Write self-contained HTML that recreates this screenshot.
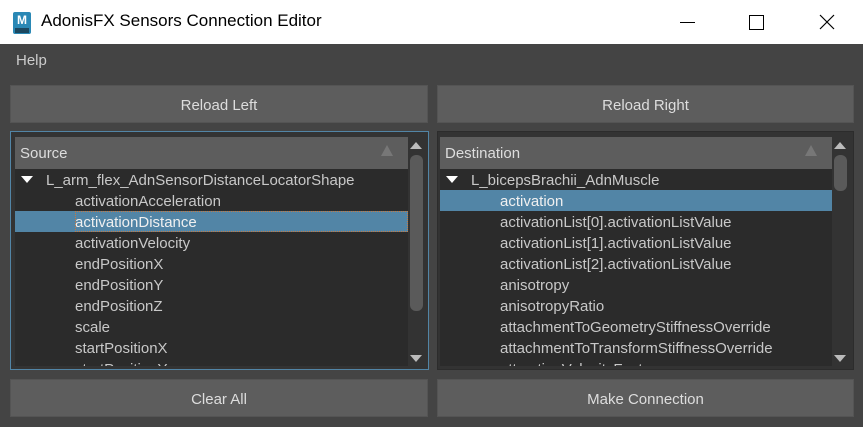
<!DOCTYPE html>
<html><head><meta charset="utf-8"><style>
*{margin:0;padding:0;box-sizing:border-box}
body{width:863px;height:427px;background:#444;font-family:"Segoe UI","Liberation Sans",sans-serif;overflow:hidden;position:relative;color:#c8c8c8}
.a{position:absolute}
.title{left:0;top:0;width:863px;height:44px;background:#fff}
.btn{background:#5d5d5d;border:1px solid #545454;color:#ddd;font-size:15px;display:flex;align-items:center;justify-content:center;height:38px;padding-top:2px}
.list{background:#2b2b2b;overflow:hidden}
.hdr{background:#5d5d5d;height:32px;font-size:15px;color:#ddd;padding:8px 0 0 5px}
.row{height:21px;font-size:15px;line-height:23px;white-space:nowrap;color:#c8c8c8}
.sel{background:#5285a6;color:#f0f0f0}
.sb{background:#333}
.thumb{position:absolute;left:2px;width:13px;background:#5a5a5a;border-radius:6px}
.tri{width:0;height:0;border-left:6px solid transparent;border-right:6px solid transparent;position:absolute;left:2px}
</style></head><body>
<div class="a title">
<div class="a" style="left:13px;top:12px;width:18px;height:22px;background:#2a88b5;border-radius:2px;color:#fff;font:bold 12px 'Liberation Sans',sans-serif;text-align:center;line-height:16px">M<div style="position:absolute;left:2px;bottom:1px;width:14px;height:5px;background:#1c4860"></div></div>
<div class="a" style="left:41px;top:11px;font-size:17px;color:#000">AdonisFX Sensors Connection Editor</div>
<div class="a" style="left:680px;top:22px;width:15px;height:1px;background:#000"></div>
<div class="a" style="left:749px;top:15px;width:15px;height:15px;border:1px solid #000"></div>
<svg class="a" style="left:819px;top:14px" width="16" height="16"><path d="M1 1L15 15M15 1L1 15" stroke="#000" stroke-width="1.2"/></svg>
</div>
<div class="a" style="left:16px;top:52px;font-size:15px;color:#ccc">Help</div>
<div class="a btn" style="left:10px;top:85px;width:418px">Reload Left</div>
<div class="a btn" style="left:437px;top:85px;width:417px">Reload Right</div>

<div class="a" style="left:10px;top:131px;width:419px;height:239px;border:1px solid #5285a6;background:#333"></div>
<div class="a list" style="left:15px;top:137px;width:393px;height:229px">
<div class="hdr">Source</div>
<div class="a" style="left:366px;top:8px;width:0;height:0;border-left:6px solid transparent;border-right:6px solid transparent;border-bottom:11px solid #777"></div>
<div class="row" style="padding-left:31px;position:relative"><span class="a" style="left:6px;top:7px;border-left:6px solid transparent;border-right:6px solid transparent;border-top:7px solid #fff"></span>L_arm_flex_AdnSensorDistanceLocatorShape</div>
<div class="row" style="padding-left:60px">activationAcceleration</div>
<div class="row sel" style="outline:1px dotted #c87a40;outline-offset:-1px;margin-left:60px;box-shadow:-60px 0 0 #5285a6">activationDistance</div>
<div class="row" style="padding-left:60px">activationVelocity</div>
<div class="row" style="padding-left:60px">endPositionX</div>
<div class="row" style="padding-left:60px">endPositionY</div>
<div class="row" style="padding-left:60px">endPositionZ</div>
<div class="row" style="padding-left:60px">scale</div>
<div class="row" style="padding-left:60px">startPositionX</div>
<div class="row" style="padding-left:60px">startPositionY</div>
</div>
<div class="a sb" style="left:408px;top:137px;width:17px;height:229px">
<div class="tri" style="top:5px;border-bottom:7px solid #bbb"></div>
<div class="thumb" style="top:18px;height:156px"></div>
<div class="tri" style="top:218px;border-top:7px solid #bbb"></div>
</div>

<div class="a" style="left:437px;top:131px;width:417px;height:239px;border:1px solid #2c2c2c;background:#333"></div>
<div class="a list" style="left:440px;top:137px;width:392px;height:229px">
<div class="hdr">Destination</div>
<div class="a" style="left:365px;top:8px;width:0;height:0;border-left:6px solid transparent;border-right:6px solid transparent;border-bottom:11px solid #777"></div>
<div class="row" style="padding-left:31px;position:relative"><span class="a" style="left:6px;top:7px;border-left:6px solid transparent;border-right:6px solid transparent;border-top:7px solid #fff"></span>L_bicepsBrachii_AdnMuscle</div>
<div class="row sel" style="padding-left:60px">activation</div>
<div class="row" style="padding-left:60px">activationList[0].activationListValue</div>
<div class="row" style="padding-left:60px">activationList[1].activationListValue</div>
<div class="row" style="padding-left:60px">activationList[2].activationListValue</div>
<div class="row" style="padding-left:60px">anisotropy</div>
<div class="row" style="padding-left:60px">anisotropyRatio</div>
<div class="row" style="padding-left:60px">attachmentToGeometryStiffnessOverride</div>
<div class="row" style="padding-left:60px">attachmentToTransformStiffnessOverride</div>
<div class="row" style="padding-left:60px">attractionVelocityFactor</div>
</div>
<div class="a sb" style="left:832px;top:137px;width:17px;height:229px">
<div class="tri" style="top:5px;border-bottom:7px solid #bbb"></div>
<div class="thumb" style="top:18px;height:36px"></div>
<div class="tri" style="top:218px;border-top:7px solid #bbb"></div>
</div>

<div class="a btn" style="left:10px;top:379px;width:418px">Clear All</div>
<div class="a btn" style="left:437px;top:379px;width:417px">Make Connection</div>
</body></html>
